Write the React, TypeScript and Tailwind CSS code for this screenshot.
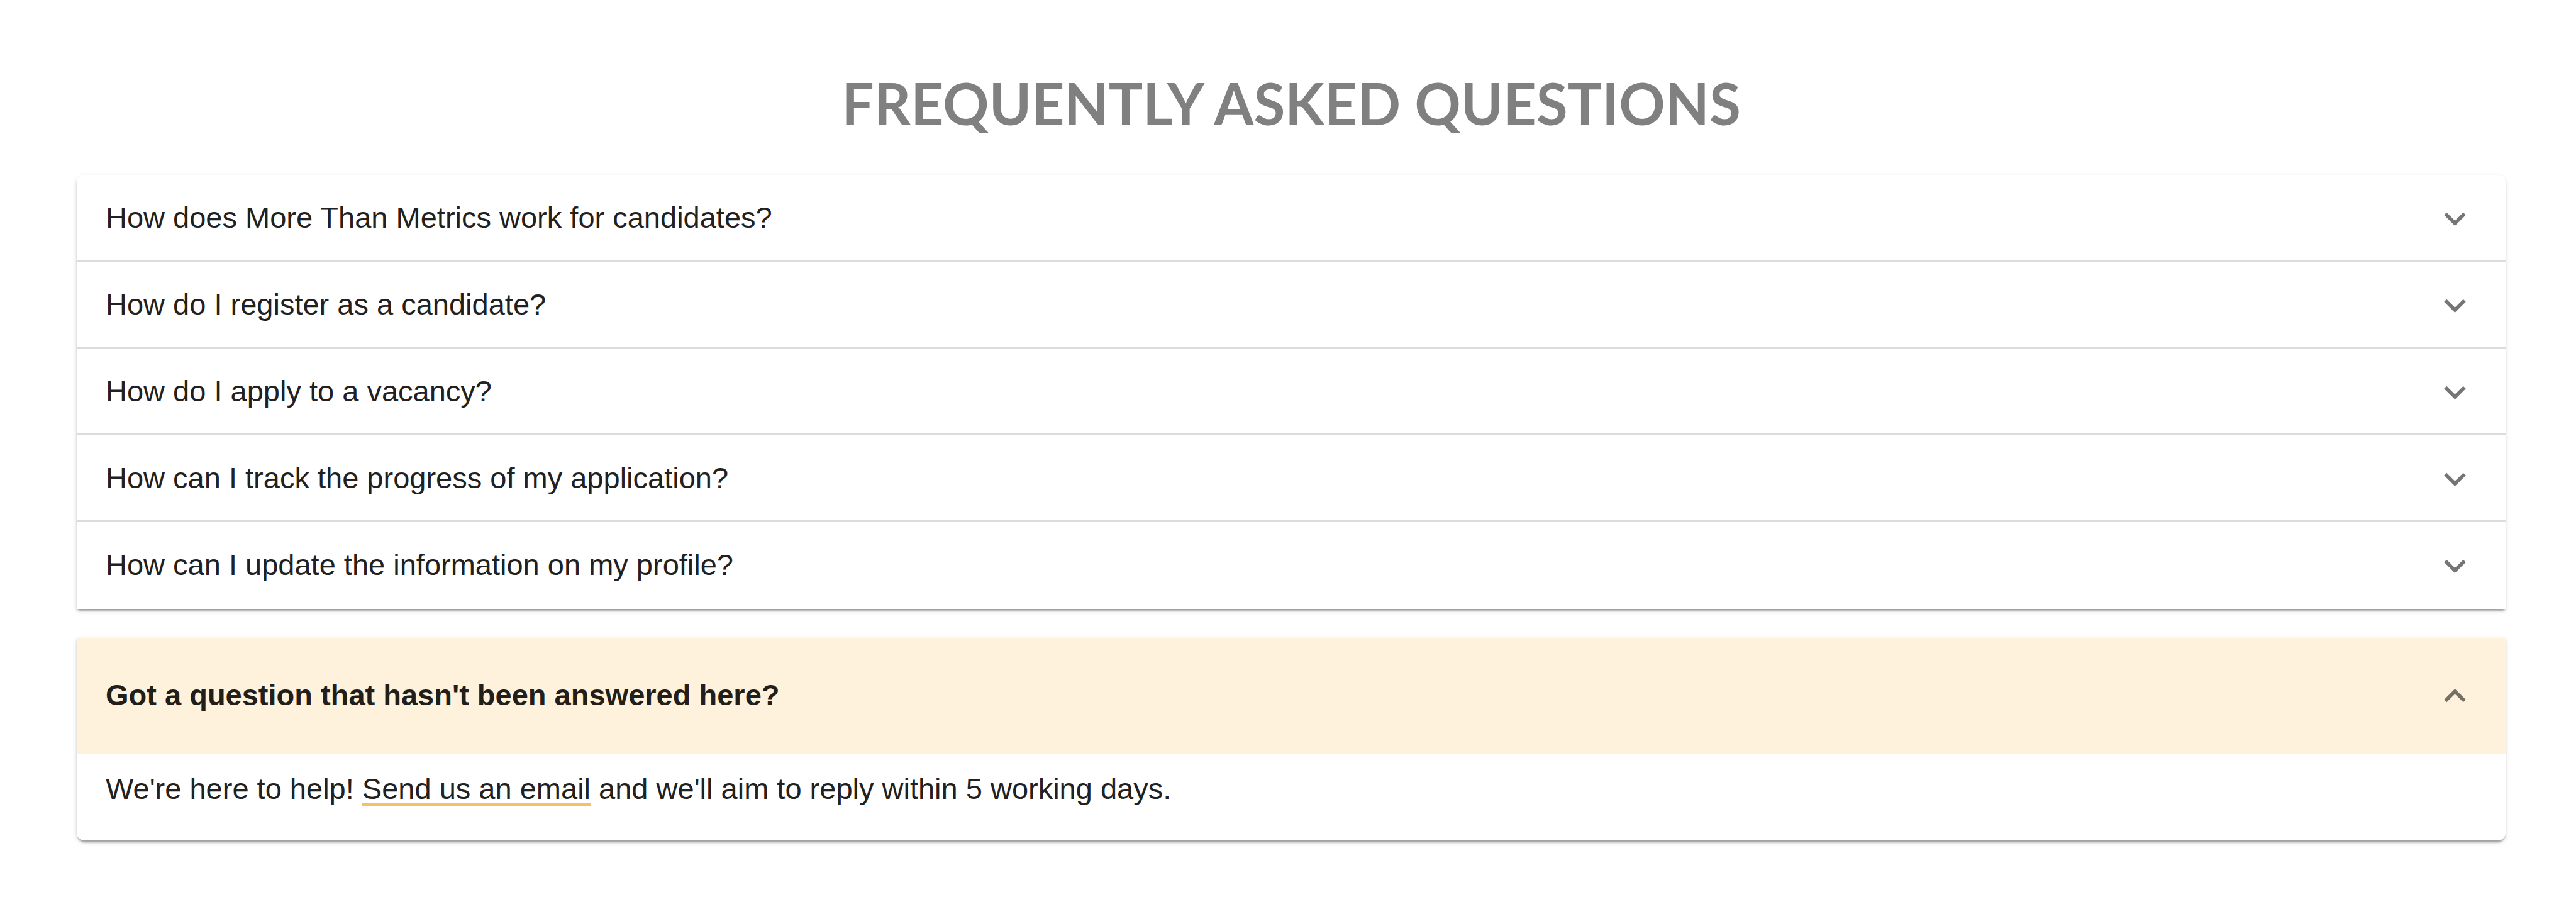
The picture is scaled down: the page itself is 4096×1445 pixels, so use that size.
import { useState } from "react";

const questions = [
  "How does More Than Metrics work for candidates?",
  "How do I register as a candidate?",
  "How do I apply to a vacancy?",
  "How can I track the progress of my application?",
  "How can I update the information on my profile?",
];

function Chevron({ up = false }: { up?: boolean }) {
  return (
    <svg viewBox="0 0 24 24" aria-hidden="true" className="size-[69px] shrink-0 fill-black/54">
      <path d={up ? "M7.41 15.41 12 10.83l4.59 4.58L18 14l-6-6-6 6z" : "M7.41 8.59 12 13.17l4.59-4.58L18 10l-6 6-6-6z"} />
    </svg>
  );
}

export default function App() {
  const [open, setOpen] = useState(true);
  return (
    <main className="min-h-screen bg-white pt-[104px] pr-[112px] pb-[106px] pl-[122px] font-['Liberation_Sans',Arial,sans-serif] text-[47px] leading-[69px] text-[#212121]">
      <h1 className="mb-[55px] text-center font-['Lato',sans-serif] text-[91px] leading-[119px] font-bold text-[#808080]">
        FREQUENTLY ASKED QUESTIONS
      </h1>
      <section className="rounded-t-[12px] bg-white shadow-[0_6px_3px_-3px_rgba(0,0,0,0.2),0_3px_3px_0_rgba(0,0,0,0.14),0_3px_9px_0_rgba(0,0,0,0.12)]">
        {questions.map((q) => (
          <button key={q} type="button" aria-expanded="false" className="flex h-[138px] w-full items-center justify-between px-[46px] text-left shadow-[inset_0_-3px_0_#dcdcdc] last:shadow-none">
            <span className="pb-1">{q}</span>
            <Chevron />
          </button>
        ))}
      </section>
      <section className="mt-[46px] rounded-b-[12px] bg-white shadow-[0_6px_3px_-3px_rgba(0,0,0,0.2),0_3px_3px_0_rgba(0,0,0,0.14),0_3px_9px_0_rgba(0,0,0,0.12)]">
        <button type="button" aria-expanded={open} onClick={() => setOpen(!open)} className="flex h-[184px] w-full items-center justify-between bg-[#fef2dd] px-[46px] text-left font-bold text-[#221f1b]">
          <span className="pb-1">Got a question that hasn't been answered here?</span>
          <Chevron up={open} />
        </button>
        {open && (
          <p className="px-[46px] pt-[21px] pb-[48px]">
            We're here to help! <a href="mailto:help@example.com" className="underline decoration-[#f4c165] decoration-[6px] underline-offset-[6px]">Send us an email</a> and we'll aim to reply within 5 working days.
          </p>
        )}
      </section>
    </main>
  );
}
